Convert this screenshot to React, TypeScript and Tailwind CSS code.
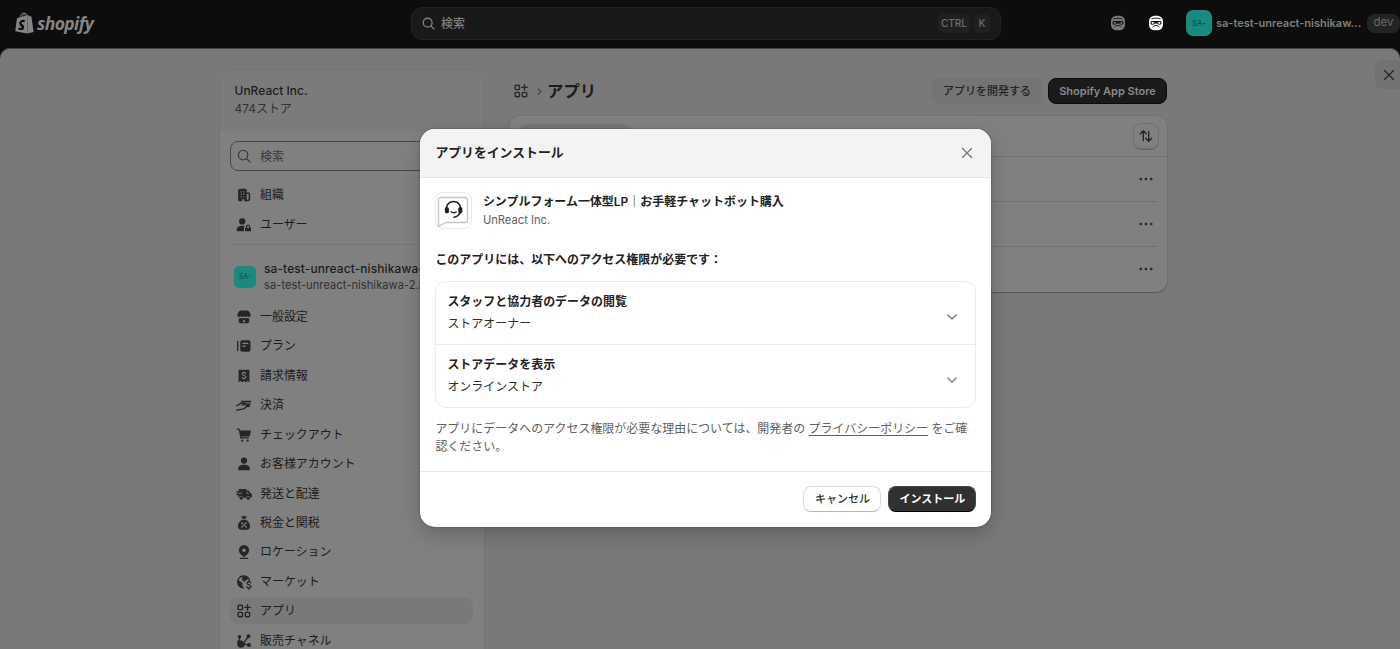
import type { ReactNode } from 'react'
import { clsx } from 'clsx'
import { SiShopify } from 'react-icons/si'

const icons: Record<string, ReactNode> = {
  org: (
    <>
      <path fillRule="evenodd" d="M5.300 3h6.200A1.500 1.500 0 0 1 13 4.500V17h-2.600v-2.300H8V17H5a1.500 1.500 0 0 1-1.500-1.500V5a2 2 0 0 1 1.800-2Zm.9 2.800v1.300h1.400V5.800Zm2.900 0v1.300h1.400V5.800ZM6.200 8.700V10h1.400V8.700Zm2.900 0V10h1.400V8.700ZM6.200 11.600v1.300h1.400v-1.300Zm2.900 0v1.300h1.400v-1.300Z" />
      <path d="M13 7.800h1.500a1.500 1.500 0 0 1 1.500 1.500v5.200a1.700 1.700 0 0 1-1.700 1.700H11" fill="none" stroke="currentColor" strokeWidth="1.700" />
    </>
  ),
  users: (
    <>
      <circle cx="8" cy="6" r="3.500" />
      <path d="M1.800 15.500c0-3 2.700-4.700 6.200-4.700 1 0 1.900.1 2.700.4-.5.700-.7 1.300-.7 2.100V17H3.300c-.9 0-1.500-.6-1.500-1.500Z" />
      <path d="M11.200 13.200h6.600v2.800a1 1 0 0 1-1 1h-4.600a1 1 0 0 1-1-1Z" />
      <path d="M12.800 13.500v-2a1.800 1.800 0 0 1 3.500 0v2" fill="none" stroke="currentColor" strokeWidth="1.400" />
    </>
  ),
  store: (
    <>
      <path d="M6.800 2.800h6.400c1 0 1.800.4 2.400 1.200l1.500 2.500c1 1.800 0 3.500-1.600 3.500-.9 0-1.500-.4-1.900-1-.4.600-1 1-1.800 1s-1.400-.4-1.800-1c-.4.600-1 1-1.800 1s-1.400-.4-1.800-1c-.4.600-1 1-1.900 1-1.600 0-2.600-1.700-1.600-3.500L4.400 4c.6-.8 1.400-1.200 2.400-1.200Z" />
      <path fillRule="evenodd" d="M4.200 11.300c.9 0 1.600-.2 2.100-.6.600.4 1.200.6 1.900.6s1.300-.2 1.800-.6c.5.400 1.100.6 1.800.6s1.300-.2 1.900-.6c.5.400 1.200.6 2.100.6V15a2 2 0 0 1-2 2H6.200a2 2 0 0 1-2-2Zm4.700 2.200v2.200h2.200v-2.200Z" />
    </>
  ),
  plan: (
    <>
      <path fillRule="evenodd" d="M8 3.500h7A2.200 2.200 0 0 1 17.200 5.700v8.600A2.200 2.200 0 0 1 15 16.500H8a2.200 2.200 0 0 1-2.200-2.200V5.700A2.200 2.200 0 0 1 8 3.500Zm.3 3v1.400h6.400V6.500Zm0 3v1.400h3.600V9.500Z" />
      <path d="M3 5v10" stroke="currentColor" strokeWidth="1.500" strokeLinecap="round" />
    </>
  ),
  billing: (
    <>
      <path d="M5.500 3h9A1.500 1.500 0 0 1 16 4.500V17l-2-1.400L12 17l-2-1.400L8 17l-2-1.400L4 17V4.500A1.500 1.500 0 0 1 5.500 3Z" />
      <path className="stroke-[#808080]" d="M12.200 7.300c-.4-.7-1.200-1-2.200-1-1.200 0-2 .6-2 1.500 0 2.200 4.200 1 4.200 3.300 0 1-.9 1.600-2.200 1.600-1.100 0-2-.4-2.400-1.200M10 5v1.300m0 6.400V14" fill="none" strokeWidth="1.300" />
    </>
  ),
  payments: (
    <>
      <path d="M7.500 5.200h9.800a.8.8 0 0 1 .7 1l-.3 1H6.300l.4-1.300c.1-.4.400-.7.800-.7ZM9 8.400h8.300l-.9 3a1.500 1.500 0 0 1-1.400 1h-3.200l1-2Z" />
      <path d="M1.800 10.700c2-.2 3.200-2.700 5.600-2.700h3.200c1 0 1 1.300 0 1.500l-2.800.6m-5.800 5.700c2.200 0 3-1 4.700-1 2.600 0 5.300-1.300 6.300-5" fill="none" stroke="currentColor" strokeWidth="1.500" strokeLinecap="round" />
    </>
  ),
  cart: (
    <>
      <path d="M2.500 3.500h1.200c.8 0 1.200.4 1.400 1.200l1.500 8.500h8.300" fill="none" stroke="currentColor" strokeWidth="1.500" strokeLinecap="round" />
      <path d="M5 5h12a.6.600 0 0 1 .6.800l-1 4.500a1.600 1.600 0 0 1-1.600 1.300H6.300Z" />
      <circle cx="8" cy="16.300" r="1.200" />
      <circle cx="14" cy="16.300" r="1.200" />
    </>
  ),
  person: (
    <>
      <circle cx="10" cy="6.200" r="3.500" />
      <path d="M3.500 15.300c0-2.900 2.900-4.500 6.500-4.500s6.500 1.600 6.500 4.500c0 .9-.6 1.700-1.500 1.700H5c-.9 0-1.500-.8-1.500-1.700Z" />
    </>
  ),
  truck: (
    <>
      <path d="M5 4.500h6.500A1.500 1.500 0 0 1 13 6h1.300c.6 0 1 .3 1.300.8l.9 1.900 1.500.7c.5.300.8.700.8 1.300v2.100c0 .9-.6 1.400-1.400 1.400H17a2.400 2.400 0 0 0-4.700 0H9.200a2.400 2.400 0 0 0-4.700 0H4v-3.400h3.500V9.500H2.200V8.300h6V7.200H4V5.500a1 1 0 0 1 1-1Z" />
      <circle cx="6.900" cy="14.600" r="1.700" />
      <circle cx="14.700" cy="14.600" r="1.700" />
      <path d="M1.500 7.700H8M1.500 10.600H7" stroke="currentColor" strokeWidth="1.300" />
      <path className="stroke-[#808080]" d="M13.300 7.600v1.800h2" fill="none" strokeWidth="0.900" />
    </>
  ),
  tax: (
    <>
      <path d="M7 2.500h6l-1.200 2.700H8.200ZM7.600 6.300h4.800c2.600 1.900 4.400 4.600 4.400 7.200 0 2.500-1.700 4-4 4H7.200c-2.300 0-4-1.500-4-4 0-2.600 1.800-5.300 4.400-7.200Z" />
      <path className="stroke-[#808080]" d="m7.600 14.700 4.800-5" strokeWidth="1.300" strokeLinecap="round" />
      <circle className="fill-[#808080]" cx="7.900" cy="10.300" r="1.100" />
      <circle className="fill-[#808080]" cx="12.200" cy="14.100" r="1.100" />
    </>
  ),
  location: (
    <>
      <path fillRule="evenodd" d="M10 2.300A5.700 5.700 0 0 1 15.700 8c0 3-2.500 4.900-4.500 6.800a1.700 1.700 0 0 1-2.400 0C6.800 12.900 4.300 11 4.300 8A5.700 5.700 0 0 1 10 2.300Zm0 3.700a2 2 0 1 0 0 4 2 2 0 0 0 0-4Z" />
      <path d="M6 17h8" stroke="currentColor" strokeWidth="1.500" strokeLinecap="round" />
    </>
  ),
  market: (
    <>
      <path d="M9.500 16.600a6.700 6.700 0 1 1 6.700-8.400" fill="none" stroke="currentColor" strokeWidth="1.500" strokeLinecap="round" />
      <path d="M3.500 7.500 6 9.500l2.500 2-.5 2 1.500 3C5.500 16.500 3 14 3 10ZM8.500 3.500c3-.5 5.500.5 6.700 3l-2.700 1.300-2 2-2.200-1.200-.6-2.200Z" />
      <path d="M17.500 10.800c-.4-.7-1.100-1-2.100-1-1.300 0-2.100.6-2.100 1.600 0 2.300 4.500 1.200 4.500 3.500 0 1-1 1.700-2.400 1.700-1.100 0-2.100-.5-2.400-1.300m2.400-6.600v1.100m0 6.800V18" fill="none" stroke="currentColor" strokeWidth="1.400" strokeLinecap="round" />
    </>
  ),
  apps: (
    <g fill="none" stroke="currentColor" strokeWidth="1.600">
      <rect x="3.500" y="3.700" width="4.800" height="4.800" rx="1" />
      <rect x="3.500" y="11.500" width="4.800" height="4.800" rx="1" />
      <rect x="11.500" y="11.500" width="4.800" height="4.800" rx="1" />
      <path d="M13.900 3v6M10.900 6h6" strokeLinecap="round" />
    </g>
  ),
  channels: (
    <>
      <path d="M5 5v6l4 2.200 5.500-7.700M9 13.200l6 1.300" fill="none" stroke="currentColor" strokeWidth="1.500" />
      <circle cx="5" cy="5.200" r="2" />
      <circle cx="15" cy="4.800" r="2.200" />
      <circle cx="15.500" cy="14.500" r="2.200" />
      <path d="M2.500 9.500h5.300l3.200 3.200c0 3.100-1.600 4.800-4.200 4.800s-4.300-1.700-4.300-4.200Z" />
    </>
  ),
}

function Icon({ name, className }: { name: string; className?: string }) {
  return (
    <svg viewBox="0 0 20 20" fill="currentColor" className={clsx('w-[18px] h-[18px] shrink-0', className)}>
      {icons[name]}
    </svg>
  )
}

function SearchIcon({ className }: { className?: string }) {
  return (
    <svg viewBox="0 0 20 20" fill="none" stroke="currentColor" strokeLinecap="round" className={clsx('shrink-0', className)}>
      <circle cx="9" cy="9" r="5.200" />
      <path d="m12.900 12.900 3.700 3.700" />
    </svg>
  )
}

function CloseIcon({ className }: { className?: string }) {
  return (
    <svg viewBox="0 0 20 20" fill="none" stroke="currentColor" strokeWidth="1.400" strokeLinecap="round" className={clsx('w-[18px] h-[18px]', className)}>
      <path d="m5 5 10 10M15 5 5 15" />
    </svg>
  )
}

// Masked round face used for the two header shortcuts
function NinjaIcon({ className }: { className?: string }) {
  return (
    <svg viewBox="0 0 16 16" className={clsx('w-4 h-4', className)}>
      <rect x="1" y="0.700" width="14" height="14.600" rx="5.500" fill="currentColor" />
      <path d="M3.400 4c3-1.100 6.200-1.100 9.200 0" fill="none" stroke="#0d0d0d" strokeWidth="0.900" />
      <path d="M2.600 6.200c3.600-.4 7.200-.4 10.800 0v3c-2 .9-3.900.4-5.400-1-1.500 1.400-3.400 1.900-5.400 1Z" fill="#0d0d0d" />
      <path d="M3.500 6.800 7.300 7.900 4 9ZM12.500 6.800 8.700 7.900 12 9Z" fill="currentColor" />
      <path d="M4.500 12.200c2.300-2.300 4.700-2.300 7 0" fill="none" stroke="#0d0d0d" strokeWidth="1" />
    </svg>
  )
}

const orgLinks = [
  { label: '組織', icon: 'org' },
  { label: 'ユーザー', icon: 'users' },
]

const storeLinks = [
  { label: '一般設定', icon: 'store' },
  { label: 'プラン', icon: 'plan' },
  { label: '請求情報', icon: 'billing' },
  { label: '決済', icon: 'payments' },
  { label: 'チェックアウト', icon: 'cart' },
  { label: 'お客様アカウント', icon: 'person' },
  { label: '発送と配達', icon: 'truck' },
  { label: '税金と関税', icon: 'tax' },
  { label: 'ロケーション', icon: 'location' },
  { label: 'マーケット', icon: 'market' },
  { label: 'アプリ', icon: 'apps', active: true },
  { label: '販売チャネル', icon: 'channels' },
]

const permissions = [
  { title: 'スタッフと協力者のデータの閲覧', detail: 'ストアオーナー' },
  { title: 'ストアデータを表示', detail: 'オンラインストア' },
]

function NavItem({ label, icon, active }: { label: string; icon: string; active?: boolean }) {
  return (
    <li className="h-[29.450px] flex items-center">
      <a className={clsx('flex items-center w-[243px] h-[26px] rounded-lg pl-[5px] gap-[7px]', active && 'bg-[#797979]')}>
        <Icon name={icon} className="text-[#252525]" />
        <span>{label}</span>
      </a>
    </li>
  )
}

function TopBar() {
  return (
    <header className="h-12 shrink-0 flex items-center text-[#808080]">
      <div className="w-[411px] flex items-center pl-[14px] text-[#858585]">
        <SiShopify className="w-[21px] h-[22px] -mt-[2px]" />
        <span className="ml-[2px] -mt-[3px] font-['Open_Sans'] italic font-bold text-[17.500px] leading-6 tracking-[-0.600px]">shopify</span>
      </div>
      <div className="w-[590px] h-[33px] -mt-px rounded-[11px] border border-[#222] bg-[#191919] flex items-center pl-[8px] pr-[10px]">
        <SearchIcon className="w-[17px] h-[17px] stroke-[1.600]" />
        <span className="ml-[4px] text-[12px] font-medium">検索</span>
        <span className="ml-auto w-[32px] h-[19px] rounded-[5px] bg-[#202020] text-[10px] font-medium flex items-center justify-center text-[#6e6e6e]">CTRL</span>
        <span className="ml-[4px] w-4 h-[19px] rounded-[5px] bg-[#202020] text-[10px] font-medium flex items-center justify-center text-[#6e6e6e]">K</span>
      </div>
      <NinjaIcon className="ml-[109px] -mt-[2px] text-[#7b7b7b]" />
      <NinjaIcon className="ml-[22px] -mt-[2px] text-white" />
      <div className="ml-[22px] -mt-[2px] w-[26px] h-[26px] rounded-[7px] bg-[#188b7e] text-[#0a4d46] text-[8px] leading-none flex items-center justify-center shrink-0">SA-</div>
      <span className="ml-[4px] -mt-[2px] text-[11px] font-semibold w-[146px] whitespace-nowrap">sa-test-unreact-nishikaw...</span>
      <span className="ml-[5px] -mt-[2px] w-[33px] h-[19px] rounded-[8px] bg-[#242424] text-[11.500px] flex items-center justify-center text-[#6a6a6a] shrink-0">dev</span>
    </header>
  )
}

function Sidebar() {
  return (
    <aside className="w-[264px] shrink-0 mt-[22px] rounded-t-[11px] bg-[#808080] shadow-[0_0_1px_1px_rgba(0,0,0,0.03)] overflow-hidden">
      <div className="h-[61px] bg-[#7b7b7b] pl-[14.500px] pt-[12px] leading-[18px]">
        <p className="font-medium tracking-[0.050px]">UnReact Inc.</p>
        <p className="text-[#333]">474ストア</p>
      </div>
      <div className="pl-[10px] pr-[10px] pt-[10px]">
        <div className="h-[30px] rounded-[8px] border border-[#464646] flex items-center pl-[4px] gap-[7px] text-[#3a3a3a]">
          <SearchIcon className="w-[18px] h-[18px] stroke-[1.400]" />
          <span className="mt-px">検索</span>
        </div>
        <ul className="mt-[9.600px]">
          {orgLinks.map(link => (
            <NavItem key={link.label} {...link} />
          ))}
        </ul>
        <div className="mt-[4.700px] h-px bg-[#767676]" />
        <div className="h-[57px] flex items-center pt-[6px] pl-[4px] gap-[8px]">
          <div className="w-[22px] h-[22px] rounded-[5px] bg-[#188b7e] text-[#0a4d46] text-[7px] leading-none flex items-center justify-center shrink-0">SA-</div>
          <div className="leading-[17px] whitespace-nowrap">
            <p className="font-medium tracking-[0.120px]">sa-test-unreact-nishikawa-2</p>
            <p className="text-[11.100px] text-[#303030] tracking-[0.070px]">sa-test-unreact-nishikawa-2.my...</p>
          </div>
        </div>
        <ul>
          {storeLinks.map(link => (
            <NavItem key={link.label} {...link} />
          ))}
        </ul>
      </div>
    </aside>
  )
}

function AppsPage() {
  return (
    <main className="w-[658px] ml-[25px] pt-[30px]">
      <div className="flex items-center h-[26px]">
        <Icon name="apps" className="ml-[3px] text-[#2a2a2a]" />
        <svg viewBox="0 0 8 10" className="w-[7px] h-[9px] ml-[6px] text-[#444]" fill="none" stroke="currentColor" strokeWidth="1.300">
          <path d="m2 1.500 3.500 3.500L2 8.500" />
        </svg>
        <h1 className="ml-[4px] text-[16.400px] font-bold">アプリ</h1>
        <button className="ml-auto w-[110px] h-[26px] rounded-[8px] bg-[#747474] text-[11px] font-medium text-[#232323]">アプリを開発する</button>
        <button className="ml-[6px] w-[119px] h-[26px] rounded-[8px] bg-[#1a1a1a] border border-[#0c0c0c] text-[11px] font-semibold text-[#8a8a8a] whitespace-nowrap">
          Shopify App Store
        </button>
      </div>
      <div className="mt-[12px] h-[176px] rounded-[11px] bg-[#808080] shadow-[0_1px_1px_0_rgba(0,0,0,0.25),0_0_1px_1px_rgba(0,0,0,0.05)]">
        <div className="h-[41px] border-b border-[#717171] flex items-center justify-between pl-[10px] pr-[8px]">
          <div className="w-[111px] h-[25px] rounded-[8px] bg-[#757575]" />
          <button className="w-[26px] h-[26px] rounded-[8px] border border-[#707070] shadow-[0_1px_0_#666] flex items-center justify-center">
            <svg viewBox="0 0 20 20" className="w-[18px] h-[18px] text-[#252525]" fill="none" stroke="currentColor" strokeWidth="1.500" strokeLinecap="round" strokeLinejoin="round">
              <path d="M7 15V4.500M3.700 7.600 7 4.200l3.300 3.400M13 5v10.500m-3.300-3L13 15.800l3.300-3.300" />
            </svg>
          </button>
        </div>
        {[0, 1, 2].map(i => (
          <div key={i} className={clsx('mx-[10px] flex items-center justify-end pr-[4px]', i < 2 ? 'h-[45px] border-b border-[#717171]' : 'h-[44px]')}>
            <svg viewBox="0 0 14 4" className="w-[14px] h-1 text-[#252525]" fill="currentColor">
              <circle cx="1.800" cy="2" r="1.300" />
              <circle cx="7" cy="2" r="1.300" />
              <circle cx="12.200" cy="2" r="1.300" />
            </svg>
          </div>
        ))}
      </div>
    </main>
  )
}

function InstallDialog() {
  return (
    <div
      role="dialog"
      className="absolute left-[420.400px] top-[129px] w-[571px] h-[397.500px] rounded-[15px] bg-white overflow-hidden shadow-[0_8px_20px_rgba(0,0,0,0.2),0_0_2px_rgba(0,0,0,0.4)] text-[11.970px] text-[#303030] flex flex-col"
    >
      <div className="h-[49px] shrink-0 bg-[#f3f3f3] border-b border-[#e6e6e6] flex items-center justify-between pl-[15px] pr-[15px]">
        <h2 className="text-[12.850px] font-semibold text-[#222]">アプリをインストール</h2>
        <CloseIcon className="text-[#757575]" />
      </div>

      <div className="px-[15px] flex-1">
        <div className="flex pt-[14px]">
          <div className="w-[37px] h-[37px] rounded-[8px] border border-[#e8e8e8] flex items-center justify-center">
            <svg viewBox="0 0 35 35" className="w-[35px] h-[35px]" fill="none">
              <path d="M4.500 4.500h25a2 2 0 0 1 2 2v21a2 2 0 0 1-2 2H10l-7.500 4v-27a2 2 0 0 1 2-2Z" stroke="#c3c7be" strokeWidth="1.300" />
              <path d="M10.500 16v-1a7 6.500 0 0 1 14 0V17c0 4.300-2.500 6.500-6.500 7.300" stroke="#1b1f1d" strokeWidth="1.500" strokeLinecap="round" />
              <rect x="8.900" y="14" width="4" height="6.300" rx="1.600" fill="#1b1f1d" />
              <rect x="22.300" y="14" width="4" height="6.300" rx="1.600" fill="#1b1f1d" />
              <path d="M15 18.700c1.500 1.200 3.700 1.200 5.200 0" stroke="#1b1f1d" strokeWidth="1.200" strokeLinecap="round" />
            </svg>
          </div>
          <div className="ml-[10.500px] mt-px leading-[18px]">
            <p className="font-semibold text-[#222]">シンプルフォーム一体型LP｜お手軽チャットボット購入</p>
            <p className="text-[11.200px] text-[#616161]">UnReact Inc.</p>
          </div>
        </div>
        <p className="mt-[21px] leading-[20px] font-semibold text-[#222]">このアプリには、以下へのアクセス権限が必要です：</p>

        <div className="mt-[11px] rounded-[11px] border border-[#ebebeb]">
          {permissions.map((p, i) => (
            <div key={p.title} className={clsx('flex items-center justify-between pl-[11px] pr-[14.500px]', i > 0 ? 'h-[63px] border-t border-[#ebebeb]' : 'h-[62px]')}>
              <div className="leading-[22px] -mt-px">
                <p className="font-semibold text-[#222]">{p.title}</p>
                <p>{p.detail}</p>
              </div>
              <svg viewBox="0 0 20 20" className="w-[18px] h-[18px] mt-[8px] text-[#777]" fill="none" stroke="currentColor" strokeWidth="1.500" strokeLinecap="round" strokeLinejoin="round">
                <path d="m5.500 7.800 4.500 4.500 4.500-4.500" />
              </svg>
            </div>
          ))}
        </div>

        <p className="mt-[11.500px] leading-[18.500px] text-[#616161] whitespace-nowrap">
          アプリにデータへのアクセス権限が必要な理由については、開発者の <a className="underline underline-offset-2">プライバシーポリシー</a> をご確<br />認ください。
        </p>
      </div>

      <div className="h-[56px] shrink-0 border-t border-[#e8e8e8] flex items-center justify-end pr-[15px] gap-[7px]">
        <button className="w-[78px] h-[26px] rounded-[8px] border border-[#dcdcdc] border-b-[#b8b8b8] text-[11px] font-medium">キャンセル</button>
        <button className="w-[88px] h-[26px] rounded-[8px] bg-[#303030] border border-[#4a4a4a] border-b-black text-[11px] font-bold text-white">インストール</button>
      </div>
    </div>
  )
}

export default function App() {
  return (
    <div className="relative w-[1400px] h-[649px] overflow-hidden bg-[#0d0d0d] flex flex-col font-['Inter','Noto_Sans_CJK_JP',sans-serif] text-[11.950px] text-[#1c1c1c]">
      <TopBar />
      <div className="flex-1 min-h-0 flex bg-[#797979] rounded-t-[10px] shadow-[inset_0_1px_0_#444] overflow-hidden">
        <div className="w-[220px] shrink-0" />
        <Sidebar />
        <AppsPage />
        <button className="ml-auto mt-[12px] w-[25px] h-[29px] rounded-l-[8px] bg-[#727272] flex items-center pl-[5px] overflow-hidden">
          <CloseIcon className="shrink-0 text-[#252525]" />
        </button>
      </div>
      <InstallDialog />
    </div>
  )
}
